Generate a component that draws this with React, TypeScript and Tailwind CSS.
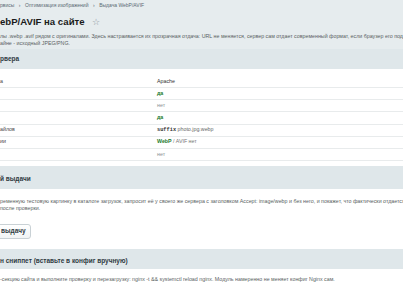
import React from "react";

const Row = ({ label, children, first }: { label?: string; children: React.ReactNode; first?: boolean }) => (
  <div className={`flex items-center ${first ? "h-[19px] pt-[7px]" : "h-[12.2px]"} border-b border-[#e8ebec]`}>
    <div className="w-[157px] shrink-0 text-[#444]">{label}</div>
    <div className="flex-1 whitespace-nowrap">{children}</div>
  </div>
);

export default function App() {
  return (
    <div className="w-[403px] h-[294px] overflow-hidden bg-[#e6ecee] font-['Liberation_Sans',Arial,sans-serif]">
      <div className="h-[12px] flex items-center gap-[4.5px] text-[5px] text-[#5b6a73] whitespace-nowrap">
        <span>рвисы</span>
        <span>›</span>
        <span>Оптимизация изображений</span>
        <span>›</span>
        <span>Выдача WebP/AVIF</span>
      </div>
      <div className="h-[20px] flex items-center gap-[7px] whitespace-nowrap">
        <span className="text-[9.6px] font-bold text-[#1a1a1a]">ebP/AVIF на сайте</span>
        <span className="text-[9px] text-[#8a949a] leading-none">☆</span>
      </div>
      <div className="text-[5.3px] leading-[7px] text-[#5a5f63] whitespace-nowrap pt-[1px]">
        <div>лы .webp .avif рядом с оригиналами. Здесь настраивается их прозрачная отдача: URL не меняется, сервер сам отдает современный формат, если браузер его поддерживает</div>
        <div>айне - исходный JPEG/PNG.</div>
      </div>
      <div className="mt-[2px] bg-white">
        <div className="h-[20px] bg-[#dfe7ea] flex items-end pb-[5px] text-[6.5px] font-bold text-[#2f3b42] whitespace-nowrap">рвера</div>
        <div className="text-[5.3px] text-[#333]">
          <Row label="а" first>Apache</Row>
          <Row><span className="font-bold text-[#1d7a2c]">да</span></Row>
          <Row><span className="text-[#8a8f92]">нет</span></Row>
          <Row><span className="font-bold text-[#1d7a2c]">да</span></Row>
          <Row label="айлов">
            <span className="font-['Liberation_Mono',monospace] font-bold text-[#333]">suffix</span>{" "}
            <span className="text-[#666]">photo.jpg.webp</span>
          </Row>
          <Row label="ии">
            <span className="font-bold text-[#1d7a2c]">WebP</span>
            <span className="text-[#777]"> / AVIF нет</span>
          </Row>
          <Row><span className="text-[#8a8f92]">нет</span></Row>
        </div>
        <div className="h-[5px]" />
        <div className="h-[23px] bg-[#dfe7ea] flex items-end pb-[5px] text-[6.5px] font-bold text-[#2f3b42] whitespace-nowrap">й выдачи</div>
        <div className="pt-[9px] text-[5.3px] leading-[6.5px] text-[#5a5f63] whitespace-nowrap">
          <div>ременную тестовую картинку в каталоге загрузок, запросит её у своего же сервера с заголовком Accept: image/webp и без него, и покажет, что фактически отдается браузеру</div>
          <div>после проверки.</div>
        </div>
        <div className="pt-[5px] pb-[9px]">
          <div className="inline-flex items-center h-[15px] pl-[2px] pr-[4px] -ml-[4px] bg-gradient-to-b from-white to-[#f1f4f5] border border-[#c9d1d5] rounded-[3px] text-[6.5px] font-bold text-[#2f3b42] whitespace-nowrap">
            <span className="ml-[2px]">выдачу</span>
          </div>
        </div>
        <div className="h-[20px] bg-[#dfe7ea] flex items-center pt-[4px] text-[6.5px] font-bold text-[#2f3b42] whitespace-nowrap">н сниппет (вставьте в конфиг вручную)</div>
        <div className="pt-[7px] text-[5.3px] leading-[6.5px] text-[#5a5f63] whitespace-nowrap">
          <div>-секцию сайта и выполните проверку и перезагрузку: nginx -t &amp;&amp; systemctl reload nginx. Модуль намеренно не меняет конфиг Nginx сам.</div>
        </div>
        <div className="pt-[5px]">
          <div className="inline-flex items-center h-[15px] pl-[2px] pr-[4px] -ml-[4px] bg-gradient-to-b from-white to-[#f1f4f5] border border-[#c9d1d5] rounded-[3px] text-[6.5px] font-bold text-[#2f3b42] whitespace-nowrap">
            <span className="ml-[2px]">ь сниппет</span>
          </div>
        </div>
        <div className="h-[20px]" />
      </div>
    </div>
  );
}
